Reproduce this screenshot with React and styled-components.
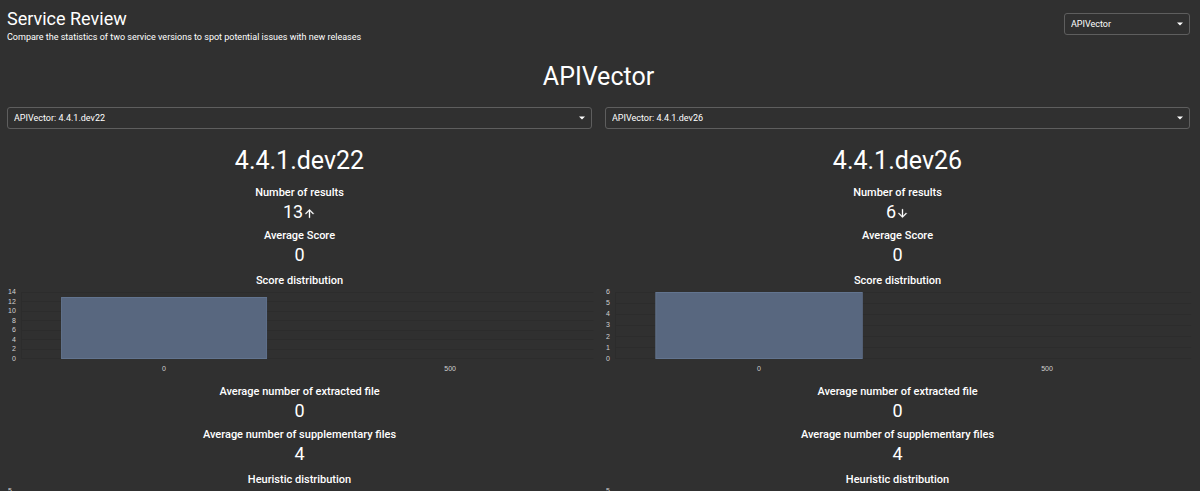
import React from "react";
import styled, { createGlobalStyle } from "styled-components";

const GlobalStyle = createGlobalStyle`
  *, *::before, *::after { box-sizing: border-box; }
  body {
    margin: 0;
    background: #303030;
    color: #fff;
    font-family: Roboto, "Liberation Sans", sans-serif;
    scrollbar-width: none;
  }
  h1, h2, h3, p { margin: 0; font-weight: 400; }
`;

const Page = styled.main`
  padding: 9px 10px 16px 7px;
`;

const Header = styled.header`
  display: flex;
  justify-content: space-between;
  align-items: flex-start;
`;

const PageTitle = styled.h1`
  && { font-size: 18px; line-height: 20px; }
`;

const Subtitle = styled.p`
  font-size: 9px;
  line-height: 16px;
`;

const SelectBox = styled.label`
  display: block;
  position: relative;
  width: ${(p) => p.$width || "100%"};
  margin-top: ${(p) => p.$top || 0};
`;

const SelectField = styled.select`
  appearance: none;
  display: block;
  width: 100%;
  height: 22px;
  padding: 0 24px 0 6px;
  border: 1px solid #5e5e5e;
  border-radius: 3px;
  background: transparent;
  color: #fff;
  font-family: inherit;
  font-size: 9px;
  option { background: #424242; }
`;

const Caret = styled.svg`
  position: absolute;
  right: 7px;
  top: 9px;
  width: 6px;
  height: 4px;
  pointer-events: none;
`;

const ServiceName = styled.h2`
  && { font-size: 25px; line-height: 32px; }
  margin-top: 16px;
  text-align: center;
`;

const Columns = styled.div`
  display: grid;
  grid-template-columns: 1fr 1fr;
  column-gap: 13px;
  margin-top: 14px;
`;

const Column = styled.section`
  min-width: 0;
  text-align: center;
`;

const VersionName = styled.h3`
  && { font-size: 25px; line-height: 32px; }
  margin: 16px 0 8px;
`;

const Metric = styled.div`
  margin-bottom: ${(p) => (p.$last ? "7px" : "5px")};
`;

const MetricTitle = styled.h3`
  && { font-size: 11px; line-height: 16px; font-weight: 500; }
`;

const MetricValue = styled.p`
  display: flex;
  justify-content: center;
  align-items: center;
  font-size: 18px;
  line-height: 22px;
`;

const Trend = styled.svg`
  width: 13px;
  height: 13px;
  margin-top: 2px;
`;

const Chart = styled.div`
  display: grid;
  grid-template-columns: auto 1fr;
  column-gap: 5px;
  height: 95px;
  padding: 3px 0 0 1px;
  color: #d0d0d0;
  font-family: "Liberation Sans", Arial, sans-serif;
  font-size: 7px;
  margin-right: -1px;
`;

const Ticks = styled.div`
  display: flex;
  flex-direction: column;
  justify-content: space-between;
  height: 75px;
  margin-top: -4px;
  text-align: right;
  line-height: 8px;
`;

const Plot = styled.svg`
  display: block;
  width: 100%;
  height: 84px;
  overflow: visible;
`;

const PLOT_HEIGHT = 67;

function Select({ label, options, width, top }) {
  return (
    <SelectBox $width={width} $top={top}>
      <SelectField aria-label={label} defaultValue={options[0]}>
        {options.map((o) => (
          <option key={o}>{o}</option>
        ))}
      </SelectField>
      <Caret viewBox="0 0 6 4" aria-hidden="true">
        <path d="M0 .5h6L3 3.5z" fill="#fff" />
      </Caret>
    </SelectBox>
  );
}

function Arrow({ direction }) {
  return (
    <Trend
      viewBox="0 0 24 24"
      fill="#fff"
      stroke="#fff"
      strokeWidth="0.5"
      role="img"
      aria-label={direction}
    >
      {direction === "up" ? (
        <path d="M4 12l1.41 1.41L11 7.83V20h2V7.83l5.58 5.59L20 12l-8-8-8 8z" />
      ) : (
        <path d="M20 12l-1.41-1.41L13 16.17V4h-2v12.17l-5.58-5.59L4 12l8 8 8-8z" />
      )}
    </Trend>
  );
}

function BarChart({ ticks, bars }) {
  const max = ticks[0];
  return (
    <Chart>
      <Ticks>
        {ticks.map((t) => (
          <span key={t}>{t}</span>
        ))}
      </Ticks>
      <Plot>
        {ticks.map((t) => {
          const y = Math.round((1 - t / max) * (PLOT_HEIGHT - 1));
          return <rect key={t} x="0" y={y} width="100%" height="1" fill="#2c2c2c" />;
        })}
        <rect x="0" y="0" width="1" height={PLOT_HEIGHT} fill="#2c2c2c" />
        {bars.map((b, i) => {
          const h = Math.round((b.value / max) * PLOT_HEIGHT);
          const start = (i * 100) / bars.length;
          return (
            <React.Fragment key={b.name}>
              {h > 0 && (
                <>
                  <rect
                    x={`${start + 7}%`}
                    y={PLOT_HEIGHT - h}
                    width="36%"
                    height={h}
                    fill="#62748f"
                  />
                  <svg x={`${start + 7}%`} y={PLOT_HEIGHT - h} width="36%" height={h - 1}>
                    <rect x="1" y="1" width="99.2%" height={h} fill="#58677f" />
                  </svg>
                </>
              )}
              <text x={`${start + 50 / bars.length}%`} y="79" textAnchor="middle" fill="#d0d0d0">
                {b.name}
              </text>
            </React.Fragment>
          );
        })}
      </Plot>
    </Chart>
  );
}

function VersionColumn({ version, other, results, trend, ticks }) {
  return (
    <Column>
      <Select
        label="Service version"
        options={[`APIVector: ${version}`, `APIVector: ${other}`]}
      />
      <VersionName>{version}</VersionName>
      <Metric>
        <MetricTitle>Number of results</MetricTitle>
        <MetricValue>
          {results}
          <Arrow direction={trend} />
        </MetricValue>
      </Metric>
      <Metric $last>
        <MetricTitle>Average Score</MetricTitle>
        <MetricValue>0</MetricValue>
      </Metric>
      <MetricTitle>Score distribution</MetricTitle>
      <BarChart
        ticks={ticks}
        bars={[
          { name: "0", value: results },
          { name: "500", value: 0 },
        ]}
      />
      <Metric>
        <MetricTitle>Average number of extracted file</MetricTitle>
        <MetricValue>0</MetricValue>
      </Metric>
      <Metric $last>
        <MetricTitle>Average number of supplementary files</MetricTitle>
        <MetricValue>4</MetricValue>
      </Metric>
      <MetricTitle>Heuristic distribution</MetricTitle>
      <BarChart ticks={[5, 4, 3, 2, 1, 0]} bars={[]} />
    </Column>
  );
}

export default function App() {
  return (
    <>
      <GlobalStyle />
      <Page>
        <Header>
          <div>
            <PageTitle>Service Review</PageTitle>
            <Subtitle>
              Compare the statistics of two service versions to spot potential issues with new
              releases
            </Subtitle>
          </div>
          <Select label="Service" options={["APIVector"]} width="126px" top="4px" />
        </Header>
        <ServiceName>APIVector</ServiceName>
        <Columns>
          <VersionColumn
            version="4.4.1.dev22"
            other="4.4.1.dev26"
            results={13}
            trend="up"
            ticks={[14, 12, 10, 8, 6, 4, 2, 0]}
          />
          <VersionColumn
            version="4.4.1.dev26"
            other="4.4.1.dev22"
            results={6}
            trend="down"
            ticks={[6, 5, 4, 3, 2, 1, 0]}
          />
        </Columns>
      </Page>
    </>
  );
}
